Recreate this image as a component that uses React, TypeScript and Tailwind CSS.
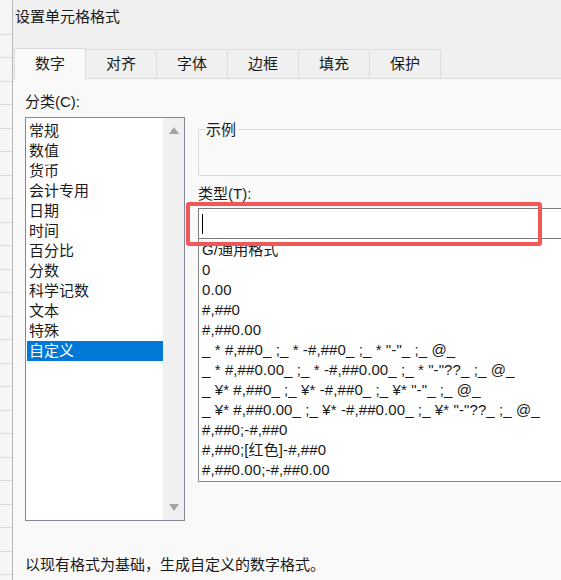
import React from 'react';

const categories = ['常规', '数值', '货币', '会计专用', '日期', '时间', '百分比', '分数', '科学记数', '文本', '特殊', '自定义'];

const formats = [
  'G/通用格式',
  '0',
  '0.00',
  '#,##0',
  '#,##0.00',
  '_ * #,##0_ ;_ * -#,##0_ ;_ * "-"_ ;_ @_',
  '_ * #,##0.00_ ;_ * -#,##0.00_ ;_ * "-"??_ ;_ @_',
  '_ ¥* #,##0_ ;_ ¥* -#,##0_ ;_ ¥* "-"_ ;_ @_',
  '_ ¥* #,##0.00_ ;_ ¥* -#,##0.00_ ;_ ¥* "-"??_ ;_ @_',
  '#,##0;-#,##0',
  '#,##0;[红色]-#,##0',
  '#,##0.00;-#,##0.00',
];

const tabs = ['数字', '对齐', '字体', '边框', '填充', '保护'];

const font = { fontFamily: '"Segoe UI", "Liberation Sans", "Noto Sans CJK SC", sans-serif' };

export default function App() {
  return (
    <div
      className="relative flex w-[561px] h-[580px] overflow-hidden text-[#1a1a1a] text-[15px]"
      style={font}
    >
      {/* spreadsheet behind the dialog */}
      <div className="w-[12px] shrink-0 bg-[#f6f6f6] flex flex-col pt-[11px]">
        {Array.from({ length: 24 }).map((_, i) => (
          <div key={i} className="h-[23.5px] shrink-0 border-b border-[#dcdcdc]" />
        ))}
      </div>

      <div className="flex-1 flex flex-col bg-[#f0f0f0] border-l border-[#b9b9b9]">
        <div className="h-[47px] pl-[2px] pt-[6px] text-[15px] leading-[22px]">设置单元格格式</div>

        <div className="flex h-[31px] items-end pl-[1px]">
          {tabs.map((t, i) =>
            i === 0 ? (
              <div
                key={t}
                className="w-[72px] h-[31px] flex items-center justify-center bg-[#f9f9f9] border border-b-0 border-[#dcdcdc] rounded-t-[2px] -mb-px relative z-10"
              >
                {t}
              </div>
            ) : (
              <div
                key={t}
                className="w-[71px] h-[29px] flex items-center justify-center bg-[#f0f0f0] border border-l-0 border-b-0 border-[#dcdcdc] rounded-t-[2px]"
              >
                {t}
              </div>
            )
          )}
        </div>

        <div className="flex-1 bg-[#f9f9f9] border-t border-[#dcdcdc] flex flex-col pl-[12px]">
          <div className="flex gap-[13px]">
            {/* category column */}
            <div className="w-[160px] shrink-0 flex flex-col">
              <div className="h-[38px] pt-[13px] leading-[20px]">分类(C):</div>
              <div className="h-[404px] border border-[#828790] bg-white flex">
                <div className="flex-1 flex flex-col pt-[3px] pl-px">
                  {categories.map((c) => (
                    <div
                      key={c}
                      className={`h-[20px] leading-[20px] pl-[2px] ${
                        c === '自定义' ? 'bg-[#0078d7] text-white' : ''
                      }`}
                    >
                      {c}
                    </div>
                  ))}
                </div>
                <div className="w-[21px] bg-[#f0f0f0] flex flex-col justify-between items-center py-[9px]">
                  <svg width="10" height="7" viewBox="0 0 10 7">
                    <path d="M0 7 L5 0 L10 7 Z" fill="#a3a3a3" />
                  </svg>
                  <svg width="10" height="7" viewBox="0 0 10 7">
                    <path d="M0 0 L5 7 L10 0 Z" fill="#a3a3a3" />
                  </svg>
                </div>
              </div>
            </div>

            {/* right column */}
            <div className="w-[400px] shrink-0 flex flex-col">
              <div className="h-[50px]" />
              <div className="h-[47px] border border-[#dcdcdc] relative">
                <span className="absolute left-[7px] -top-[10px] bg-[#f9f9f9] pr-[2px] leading-[20px]">示例</span>
              </div>
              <div className="h-[32px] pt-[8px] leading-[20px]">类型(T):</div>
              <div className="h-[31px] border border-[#7a7a7a] bg-white flex items-center pl-[3px]">
                <div className="w-px h-[20px] bg-black" />
              </div>
              <div className="h-[243px] border border-t-0 border-[#828790] bg-white flex flex-col pt-[1px] pl-[3px] tracking-[0.1px]">
                {formats.map((f) => (
                  <div key={f} className="h-[20px] leading-[20px] whitespace-pre">
                    {f}
                  </div>
                ))}
              </div>
            </div>
          </div>

          <div className="mt-auto mb-[5px] leading-[20px]">以现有格式为基础，生成自定义的数字格式。</div>
        </div>
      </div>

      {/* highlight box */}
      <div className="absolute left-[186px] top-[202px] w-[356px] h-[44px] border-[4px] border-[#f25757] rounded-[3px]" />
    </div>
  );
}
